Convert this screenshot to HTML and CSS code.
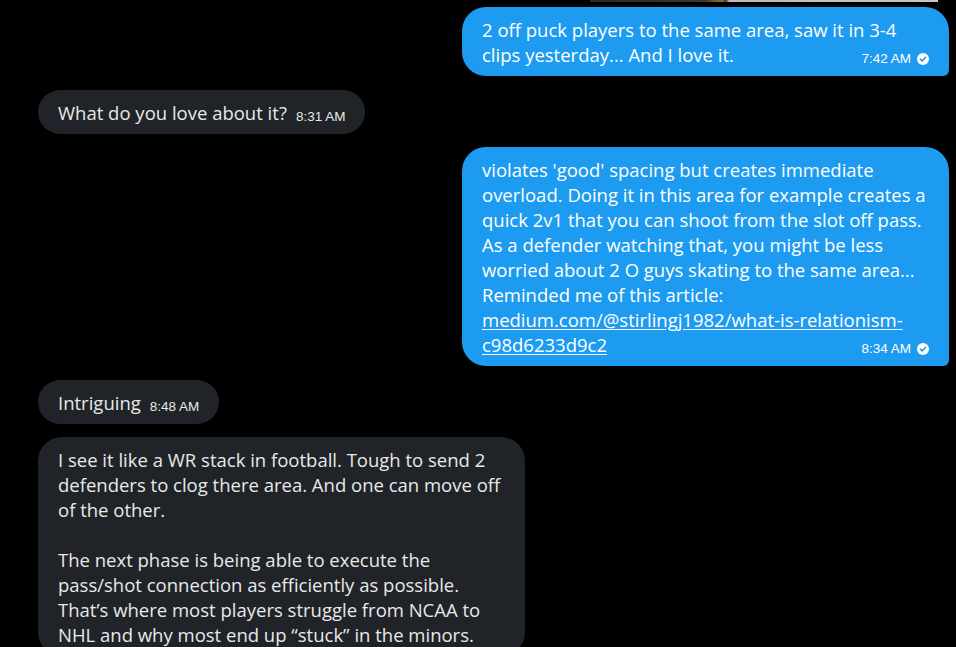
FILE: index.html
```html
<!DOCTYPE html>
<html lang="en">
<head>
<meta charset="utf-8">
<title>Messages</title>
<link rel="stylesheet" href="styles.css">
</head>
<body>
<main class="thread">
  <div class="media-tail"></div>
  <div class="messages">
    <div class="msg sent">
      2 off puck players to the same area, saw it in 3-4 clips yesterday... And I love it.<span class="meta">7:42 AM<svg class="seen" viewBox="0 0 12 12" width="12" height="12"><circle cx="6" cy="6" r="6" fill="#fff"/><path d="M3.4 6.2 L5.2 7.9 L8.6 4.3" fill="none" stroke="#1d9bf0" stroke-width="1.6" stroke-linecap="round" stroke-linejoin="round"/></svg></span>
    </div>
    <div class="msg received">
      What do you love about it?<span class="meta">8:31 AM</span>
    </div>
    <div class="msg sent">
      violates 'good' spacing but creates immediate overload. Doing it in this area for example creates a quick 2v1 that you can shoot from the slot off pass. As a defender watching that, you might be less worried about 2 O guys skating to the same area... Reminded me of this article: <a class="link" href="#">medium.com/@stirlingj1982/what-is-relationism-c98d6233d9c2</a><span class="meta">8:34 AM<svg class="seen" viewBox="0 0 12 12" width="12" height="12"><circle cx="6" cy="6" r="6" fill="#fff"/><path d="M3.4 6.2 L5.2 7.9 L8.6 4.3" fill="none" stroke="#1d9bf0" stroke-width="1.6" stroke-linecap="round" stroke-linejoin="round"/></svg></span>
    </div>
    <div class="msg received">
      Intriguing<span class="meta">8:48 AM</span>
    </div>
    <div class="msg received wide">
      <p>I see it like a WR stack in football. Tough to send 2 defenders to clog there area. And one can move off of the other.</p>
      <p>The next phase is being able to execute the pass/shot connection as efficiently as possible. That’s where most players struggle from NCAA to NHL and why most end up “stuck” in the minors.</p>
    </div>
  </div>
</main>
</body>
</html>
```

FILE: styles.css
```css
* {
  box-sizing: border-box;
}

html,
body {
  margin: 0;
  height: 100%;
  background: #000;
  overflow: hidden;
}

body {
  font-family: "Open Sans", "Noto Sans", sans-serif;
  font-size: 18.5px;
  line-height: 25px;
  color: #e7e9ea;
}

.thread {
  display: flex;
  flex-direction: column;
  padding: 0 7px 0 38px;
}

.media-tail {
  align-self: flex-end;
  width: 348px;
  height: 2px;
  margin-right: 11px;
  background: linear-gradient(90deg, #2b2826 0%, #3a3631 33%, #7a5a2a 36%, #8a6a34 38%, #3a3631 39%, #bdbdbd 40%, #c6c6c6 100%);
}

.messages {
  display: flex;
  flex-direction: column;
  gap: 13.5px;
  padding-top: 5px;
}

.msg {
  max-width: 487px;
  padding: 10px 20px 9px;
  border-radius: 24px;
}

.msg p {
  margin: 0;
}

.msg p + p {
  margin-top: 25px;
}

.sent {
  align-self: flex-end;
  width: 487px;
  background: #1d9bf0;
  color: #fff;
  border-bottom-right-radius: 6px;
}

.received {
  align-self: flex-start;
  background: #202327;
}

.wide {
  width: 487px;
}

.link {
  color: #fff;
  text-decoration: underline;
  text-underline-offset: 2px;
}

.meta {
  float: right;
  display: flex;
  align-items: center;
  gap: 6px;
  margin: 9px 0 0 9px;
  font-family: "Liberation Sans", Arial, sans-serif;
  font-size: 13.5px;
  line-height: 16px;
  white-space: nowrap;
}

.sent .meta {
  color: #fff;
}

.seen {
  display: block;
}
```
